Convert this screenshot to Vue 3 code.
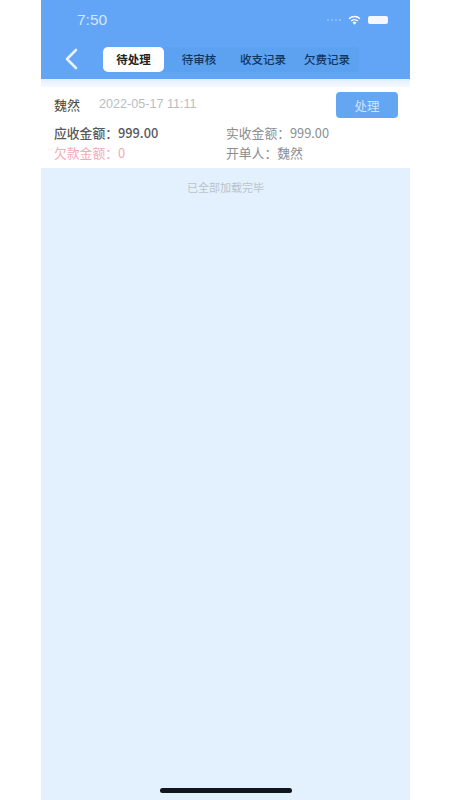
<template>
  <div class="page">
    <header class="head">
      <div class="status">
        <span class="time">7:50</span>
        <div class="status-right">
          <span class="signal">
            <i v-for="n in 4" :key="n"></i>
          </span>
          <svg class="wifi" width="13" height="10" viewBox="0 0 14 11">
            <path d="M7 10.6 4.9 8.2a3 3 0 0 1 4.2 0z" fill="#fff" />
            <path d="M3.4 6.7a5.2 5.2 0 0 1 7.2 0" fill="none" stroke="#fff" stroke-width="1.6" />
            <path d="M1 4.1a8.6 8.6 0 0 1 12 0" fill="none" stroke="#fff" stroke-width="1.6" />
          </svg>
          <span class="battery"></span>
        </div>
      </div>
      <div class="nav">
        <svg class="back" width="14" height="22" viewBox="0 0 14 22">
          <path d="M12 2 3 11l9 9" fill="none" stroke="#e8f2fe" stroke-width="2.6" stroke-linecap="round" stroke-linejoin="round" />
        </svg>
        <div class="tabs">
          <span v-for="(t, i) in tabs" :key="t" class="tab" :class="{ on: i === 0 }">{{ t }}</span>
        </div>
      </div>
    </header>
    <div class="strip"></div>

    <section class="card">
      <div class="top">
        <span class="name">魏然</span>
        <span class="date">2022-05-17 11:11</span>
        <button class="btn">处理</button>
      </div>
      <div class="info">
        <span class="dark">应收金额：999.00</span>
        <span>实收金额：999.00</span>
        <span class="red">欠款金额：0</span>
        <span>开单人：魏然</span>
      </div>
    </section>

    <p class="done">已全部加载完毕</p>

    <div class="home"></div>
  </div>
</template>

<script setup>
const tabs = ['待处理', '待审核', '收支记录', '欠费记录']
</script>

<style>
html,
body {
  background: #fff;
}
</style>

<style scoped>
.page {
  width: 369px;
  height: 800px;
  margin-left: 41px;
  background: #e3f1fe;
  display: flex;
  flex-direction: column;
  font-family: "Noto Sans CJK SC", "Liberation Sans", sans-serif;
  overflow: hidden;
}

.head {
  height: 79px;
  background: #62a5f6;
  box-sizing: border-box;
  flex-shrink: 0;
}

.status {
  height: 42px;
  padding: 10px 22px 0 36px;
  box-sizing: border-box;
  display: flex;
  justify-content: space-between;
  align-items: flex-start;
}

.time {
  font-family: "Liberation Sans", sans-serif;
  font-size: 15.5px;
  line-height: 20px;
  color: #d6e7fc;
}

.status-right {
  display: flex;
  align-items: center;
  gap: 7px;
  height: 20px;
}

.signal {
  display: flex;
  gap: 2px;
  align-items: flex-end;
  opacity: 0.3;
}

.signal i {
  width: 2px;
  height: 2px;
  background: #dcebfd;
}

.battery {
  width: 20px;
  height: 8px;
  background: #f4f8fe;
  border-radius: 2px;
}

.nav {
  display: flex;
  align-items: center;
  padding-left: 23px;
  height: 32px;
  margin-top: 1px;
}

.tabs {
  margin-left: 25px;
  display: flex;
  align-items: center;
  background: #5da1f1;
  border-radius: 4px;
  font-size: 11.5px;
}

.tab {
  width: 64px;
  text-align: center;
  line-height: 25px;
  color: #123560;
  font-weight: 500;
}

.tab.on {
  width: 61px;
  margin-right: 3px;
  background: #fff;
  color: #222;
  font-weight: 700;
  border-radius: 5px;
}

.strip {
  height: 8px;
  flex-shrink: 0;
  background: linear-gradient(#dff0fe, #f7f9fd);
}

.card {
  height: 81px;
  flex-shrink: 0;
  background: #fff;
  box-sizing: border-box;
  padding: 4px 12px 0 13px;
}

.top {
  display: flex;
  align-items: center;
  height: 26px;
}

.name {
  font-size: 13px;
  color: #444;
  width: 45px;
}

.date {
  font-family: "Liberation Sans", sans-serif;
  font-size: 12.6px;
  color: #b9bdc2;
}

.btn {
  margin: 2px 0 0 auto;
  width: 62px;
  height: 26px;
  border: 0;
  padding: 0;
  border-radius: 4px;
  background: #65a6f2;
  color: #cfe3fb;
  font: inherit;
  font-size: 12.5px;
}

.info {
  display: grid;
  grid-template-columns: 172px 1fr;
  margin-top: 6px;
  font-size: 12.8px;
  line-height: 20px;
  color: #8a8d91;
}

.dark {
  color: #55585c;
  font-weight: 500;
}

.red {
  color: #f3a9b4;
}

.done {
  margin: 12px 0 0;
  text-align: center;
  font-size: 11px;
  line-height: 15px;
  color: #b9c3cc;
}

.home {
  margin: auto auto 7px;
  width: 132px;
  height: 5px;
  border-radius: 3px;
  background: #12161c;
}
</style>
